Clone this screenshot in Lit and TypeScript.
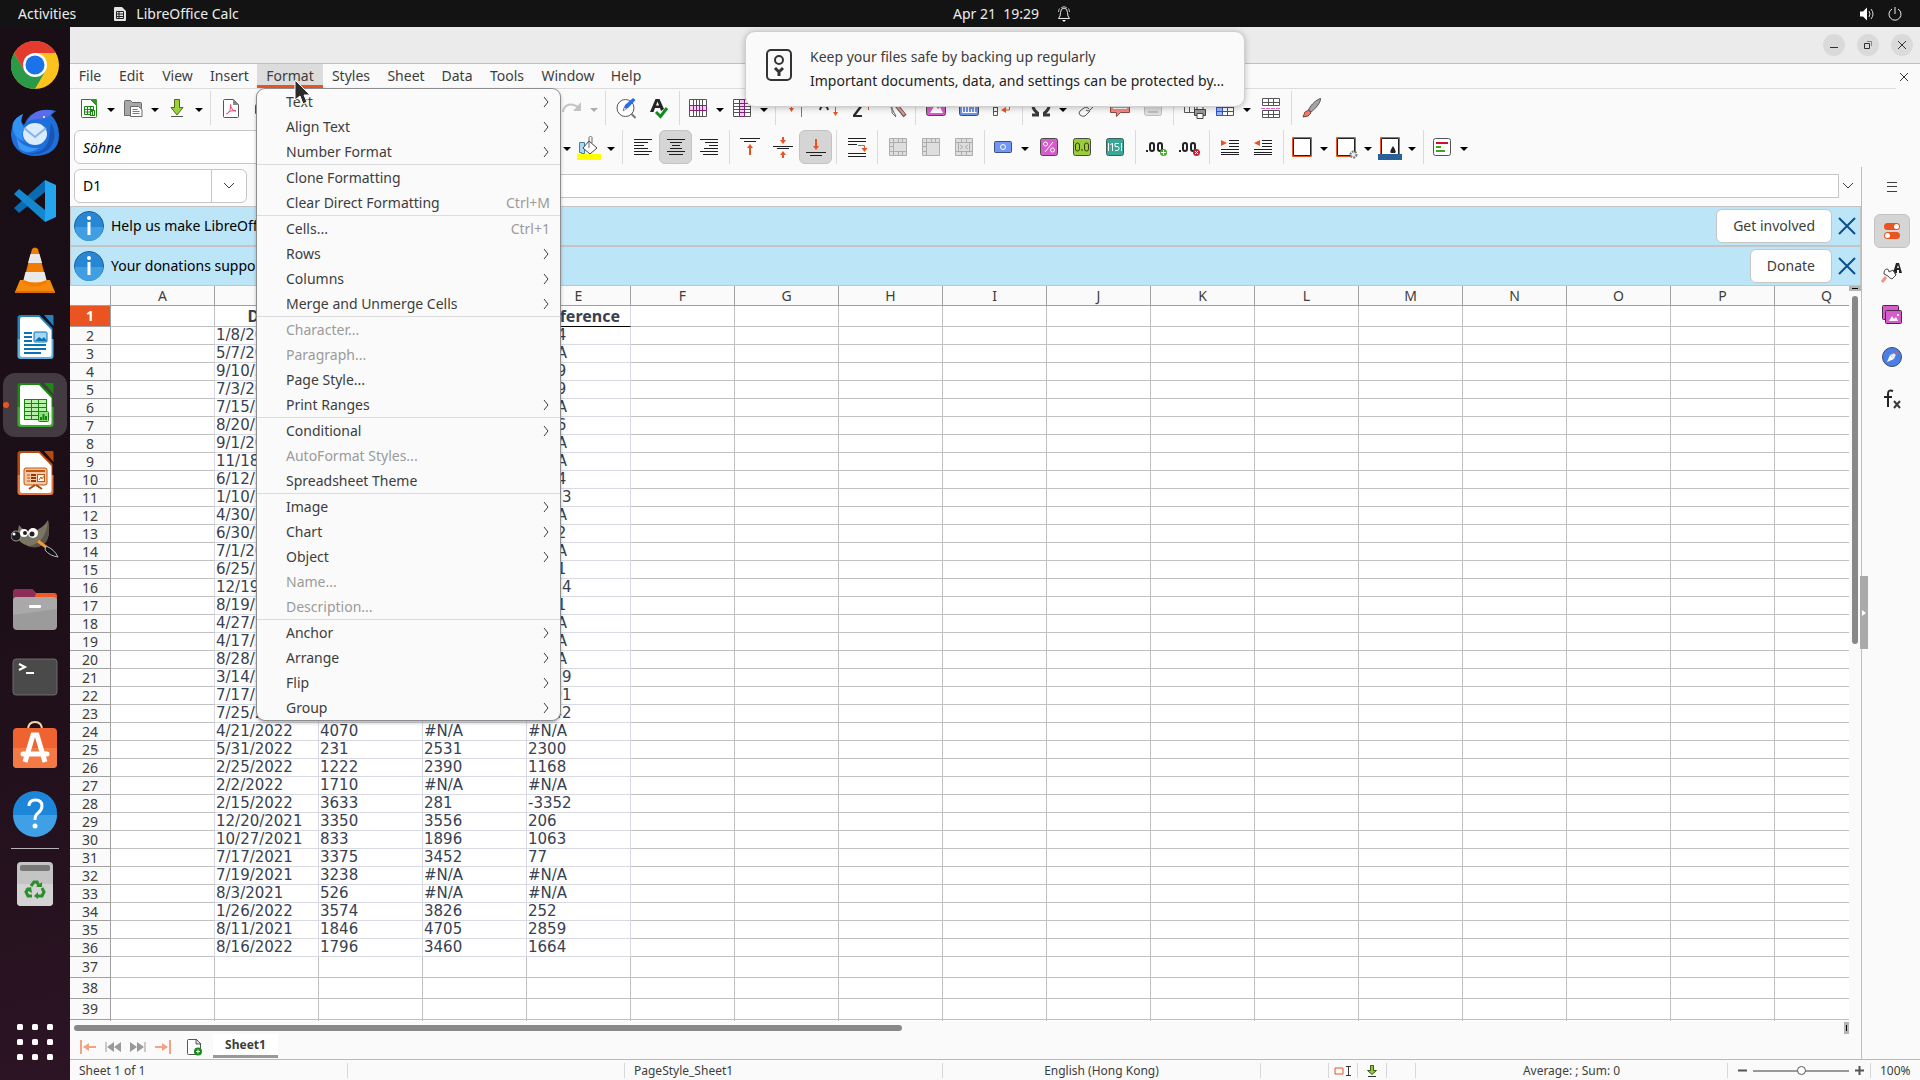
import { LitElement, html, svg, css, nothing, type TemplateResult } from "lit";
import { customElement, state } from "lit/decorators.js";
import { classMap } from "lit/directives/class-map.js";

type Art = ReturnType<typeof svg>;

const K = "#3d3d3d";
const O = "#e95420";
const line = (d: string, c = K, w = 1) => svg`<path d=${d} fill="none" stroke=${c} stroke-width=${w} />`;
const area = (d: string, c: string, s = "none", w = 1) => svg`<path d=${d} fill=${c} stroke=${s} stroke-width=${w} />`;

/* Toolbar glyphs, drawn on a 24 x 24 grid. */
const art: Record<string, Art> = {
  newSheet: svg`${area("M4.5 3.5h9l6 6v11q0 1-1 1h-13q-1 0-1-1z", "#fff", "#18880f", 1)}${area("M13 3h6q1 0 1 1v6z", "#2f9a24")}${line("M7.5 10.5h9v8h-9zM7 13.500h10M7 16h10M10.500 10v9M13.500 10v9", "#18880f", 1)}${area("M13 14h5v6h-5z", "#18880f")}${line("M14.500 16v3M16.500 15v4", "#fff", 1)}`,
  open: svg`${area("M3.5 19.500v-14q0-1 1-1h5l2 2h8q1 0 1 1v12z", "#a8a8a8", "#6b6b6b")}${area("M9.500 10.500h8l3.500 3v7h-11.500z", "#fff", "#6b6b6b")}${line("M11.500 13.500h5M11.500 15.500h7M11.500 17.500h7", "#6f6fd8")}`,
  save: svg`${area("M9.500 3.500h5v8h3.500l-6 7.500-6-7.500h3.500z", "#9bd13a", "#4e6b1c")}${line("M6 20.500h12", "#555")}`,
  pdf: svg`${area("M4.500 4.500q0-1 1-1h9l5 5v12q0 1-1 1h-13q-1 0-1-1z", "#fff", "#555")}${area("M14 3l6 6h-6z", "#8a8a8a")}${line("M7.500 18c3-1 4.500-5 4-9.500c.5 4 2 6 5.500 6.500c-4-.8-7 0-9.500 3", "#e8436a", 1)}`,
  print: svg`${area("M3.500 9.500q0-1 1-1h15q1 0 1 1v8h-17z", "#b0b0b0", "#555")}${area("M7 4h10v5H7zM7 14h10v7H7z", "#fff", "#555")}`,
  redo: svg`${line("M3 16c1-8 9-10 16-4", "#c4c4c4", 2)}${area("M21 6v9h-8z", "#c4c4c4")}`,
  find: svg`<circle cx="11.500" cy="12" r="8.500" fill="#fff" stroke="#555" stroke-width="1" />${line("M17.500 18l4 4", "#777", 2)}${area("M9 14l2-5 8-7 2.500 2-7.500 8z", "#2b6bea")}${area("M9 15l1.500-4 2 2z", "#fff", "#333", 0.5)}`,
  spell: svg`${area("M3 16L8.500 3h4L17 13l-3 2-1-3H8l-1.500 4zM9 9.500h3L10.500 5.500z", "#242424")}${line("M9 16l4.500 4.500L20 12", "#138a1e", 3)}`,
  row: svg`${area("M3.500 3.500h17v17h-17z", "#fff", "#555")}${line("M7.500 3v18M10.500 3v18M13.500 3v18M16.500 3v18", "#555")}${area("M3.500 9.500h17v5h-17z", "#f4d0f1", "#84207c")}${line("M7.500 9v6M10.500 9v6M13.500 9v6M16.500 9v6", "#84207c")}`,
  column: svg`${area("M3.500 3.500h17v17h-17z", "#fff", "#555")}${line("M3 7.500h18M3 10.500h18M3 13.500h18M3 16.500h18", "#555")}${area("M9.500 3.500v17h5v-17z", "#f4d0f1", "#84207c")}${line("M9 7.500h6M9 10.500h6M9 13.500h6M9 16.500h6", "#84207c")}`,
  sort: svg`${line("M7.500 4v11M17.500 9v12", O, 1)}${area("M5 12h5l-2.500 4zM15 10h5l-2.500-4z", O)}`,
  sortAsc: svg`${line("M3 14l1-3q3-2 6 0l1 3", "#2b2b2b", 2)}${line("M18.500 5v13", O)}${area("M16 16h5l-2.500 4z", O)}`,
  sortDesc: svg`${area("M3 9h9v2l-6 8h6v2H3v-2l6-8H3z", "#2b2b2b")}${line("M18.500 5v9", O)}${area("M16 8h5l-2.500-4z", O)}`,
  filter: svg`${line("M5 6l8 14M9 9v8l4 4", "#666")}${line("M10 5l12 15", "#555", 4)}${line("M10.500 6l11 13", "#f29487", 2)}`,
  image: svg`<rect x="2.500" y="3.500" width="19" height="16" rx="2" fill="#d65ccb" stroke="#4a4a4a" />${area("M6 17l5-8 3 4 2-2 3 6z", "#fff")}`,
  chart: svg`<rect x="2.500" y="3.500" width="19" height="16" rx="2" fill="#6f93f0" stroke="#4a4a4a" />${line("M5.500 6v10.500h14M8.500 16v-5M11.500 16v-8M14.500 16v-3M17.500 16v-7", "#fff")}`,
  pivot: svg`${line("M3.500 3.500h16v4h-16zM3.500 7.500h4v12h-4zM3.500 11.500h4M3.500 15.500h4", "#555")}${line("M19.500 9v5h-5", O)}${area("M11 14l5-3v6z", O)}`,
  omega: svg`${line("M3 19h5.500v-2C5 14.500 4 12 4 9.500 4 5.500 8 3 12 3s8 2.500 8 6.500c0 2.500-1 5-4.500 7.500v2H21", "#3a3a3a", 3)}`,
  link: svg`${line("M10 9l4-4q3-2 5 0t0 5l-4 4q-2 2-4 0M14 13l-1-1q-2-2-4 0l-4 3q-2 2 0 4t5 1l5-5", "#555", 1)}`,
  comment: svg`${area("M2.500 4.500h19v12h-9l-4 4v-4h-6z", "#f5897c", "#8d4b44")}${line("M5 8.500h14M5 12.500h14", "#fff")}`,
  headerFooter: svg`<rect x="3.500" y="3.500" width="17" height="16" rx="2" fill="#dedede" stroke="#bdbdbd" />${line("M7 7h10M7 16h10", "#bdbdbd", 2)}`,
  printArea: svg`${line("M2.500 4.500h15v12h-15zM2 10.500h16M7.500 4v12M12.500 4v12", "#555")}${line("M2 8.500h15", "#84207c", 2)}${area("M12.500 13.500h11v6h-11z", "#9a9a9a", "#444")}${area("M15 10.500h6v3h-6zM15 17.500h6v5h-6z", "#fff", "#444")}`,
  freeze: svg`${area("M3.500 3.500h17v16h-17z", "#fff", "#555")}${line("M9.500 8v12M14.500 8v12M3 11.500h18M3 15.500h18", "#555")}${area("M3.500 3.500h6v16h-6z", "#9fb7f8", "#2b57c8")}${line("M3 7.500h17M3 11.500h6M3 15.500h6", "#2b57c8")}`,
  split: svg`${area("M3.500 2.500h17v7h-17zM3.500 14.500h17v7h-17z", "#fff", "#555")}${line("M3 6.500h18M3 18.500h18M9.500 3v7M14.500 3v7M9.500 14v7M14.500 14v7", "#555")}<path d="M2 12.500h20" stroke="#e264d5" stroke-dasharray="4 1" />`,
  brush: svg`${area("M8.500 14C11 8 17 3.500 20.500 2.500C21 7 14 14 11 16z", "#a5a5a5", "#555")}${area("M3 21l2-5 4-2 2 3-3 3z", "#f27b68", "#7b4038")}`,
  fontColor: svg`${line("M6 14L12 3l6 11", K, 2)}`,
  fill: svg`${area("M2.500 7.500h5v11h-3v-1h-2z", "#a9dbf5", "#4c7f9c")}${area("M12 6l8 7-7 6-7-6z", "#fff", "#444")}${line("M12 13V2.500q1.500-3 3 0V8", "#666")}${area("M0 19h24v6H0z", "#ffff00")}`,
  alignL: svg`${line("M3 4.500h18M3 7.500h14M3 10.500h10M3 13.500h14M3 16.500h18M3 19.500h15", "#1f1f1f")}`,
  alignC: svg`${line("M3 4.500h18M6 7.500h12M8 10.500h8M6 13.500h12M3 16.500h18M5 19.500h14", "#1f1f1f")}`,
  alignR: svg`${line("M3 4.500h18M8 7.500h13M12 10.500h9M7 13.500h14M3 16.500h18M6 19.500h15", "#1f1f1f")}`,
  top: svg`${line("M2 3.500h20M6 6.500h12", "#1f1f1f")}${line("M12 11v9", O, 2)}${area("M9 13l3-4 3 4z", O)}`,
  middle: svg`${line("M2 11.500h20M6 13.500h12", "#1f1f1f")}${line("M12 2v5M12 17v6", O, 2)}${area("M9 5h6l-3 4zM9 20h6l-3-4z", O)}`,
  bottom: svg`${line("M2 17.500h20M6 20.500h12", "#1f1f1f")}${line("M12 4v9", O, 2)}${area("M9 11h6l-3 4z", O)}`,
  wrap: svg`${line("M3 3.500h18M3 6.500h18M3 9.500h9M3 18.500h18M3 21.500h18", "#1f1f1f")}${line("M13 10.500h6.500v3", O, 1)}${area("M16.500 13h6l-3 4z", O)}`,
  merge1: svg`${area("M3.500 3.500h17v17h-17z", "#dedede", "#adadad")}${line("M3 7.500h18M8 16.500h13M7.500 3v18M12.500 3v5M12.500 16v5M16.500 3v5M16.500 16v5M3 11.500h5M3 16.500h5", "#adadad")}`,
  merge2: svg`${area("M3.500 3.500h17v17h-17z", "#dedede", "#adadad")}${line("M3 7.500h18M3 16.500h5M7.500 3v18M12.500 3v5M16.500 3v5M3 11.500h5", "#adadad")}`,
  merge3: svg`${area("M3.500 3.500h17v17h-17z", "#dedede", "#adadad")}${line("M3 7.500h18M3 16.500h18M9.500 3v5M14.500 3v5M9.500 16v5M14.500 16v5M8 10l3 2-3 2M16 10l-3 2 3 2M6.500 7v10M17.500 7v10", "#adadad")}`,
  currency: svg`<rect x="3.500" y="6.500" width="17" height="11" rx="1" fill="#6f97f3" stroke="#3f4f77" /><circle cx="12" cy="12" r="2.500" fill="none" stroke="#fff" />`,
  percent: svg`<rect x="3.500" y="3.500" width="17" height="17" rx="2" fill="#d65ccb" stroke="#4a4a4a" />${line("M16 7l-8 10", "#fff")}<circle cx="8.500" cy="9" r="2" fill="none" stroke="#fff" /><circle cx="15.500" cy="15" r="2" fill="none" stroke="#fff" />`,
  number: svg`<rect x="3.500" y="3.500" width="17" height="17" rx="2" fill="#9ccc3c" stroke="#4a4a4a" /><rect x="5.500" y="8" width="4" height="8" rx="2" fill="none" stroke="#33420f" /><rect x="14.500" y="8" width="4" height="8" rx="2" fill="none" stroke="#33420f" />${line("M12 14v2", "#33420f")}`,
  date: svg`<rect x="3.500" y="3.500" width="17" height="17" rx="2" fill="#35a898" stroke="#3f5f5b" />${line("M5.500 8v8M18.500 8v8M7.500 10l2-2v8M16 8.500h-4v3h2q2 0 2 2t-2 2h-2", "#fff")}`,
  decAdd: svg`${area("M2 15h2v2H2z", "#242424")}<rect x="6" y="8" width="4" height="8" rx="2" fill="none" stroke="#242424" stroke-width="2" /><rect x="14" y="8" width="4" height="8" rx="2" fill="none" stroke="#242424" stroke-width="2" /><circle cx="19.500" cy="17.500" r="3.500" fill="#44a62b" />${line("M17 17.500h5M19.500 15v5", "#fff", 1)}`,
  decDel: svg`${area("M2 15h2v2H2z", "#242424")}<rect x="6" y="8" width="4" height="8" rx="2" fill="none" stroke="#242424" stroke-width="2" /><rect x="14" y="8" width="4" height="8" rx="2" fill="none" stroke="#242424" stroke-width="2" /><circle cx="19.500" cy="17.500" r="3.500" fill="#cc1f3a" />${line("M18 16l3 3M21 16l-3 3", "#fff", 1)}`,
  indent: svg`${line("M11 5.500h10M11 8.500h10M11 11.500h10M3 14.500h18M3 17.500h18M3 19.500h18", "#1f1f1f")}${area("M3 5l6 3-6 3z", O)}`,
  outdent: svg`${line("M11 5.500h10M11 8.500h10M11 11.500h10M3 14.500h18M3 17.500h18M3 19.500h18", "#1f1f1f")}${area("M9 5L3 8l6 3z", O)}`,
  borders: svg`${area("M2.500 2.500h19v19h-19z", "#fff", O)}${line("M3.500 3.500h17v17h-17z", "#222", 1)}`,
  borderStyle: svg`${area("M2.500 2.500h19v19h-19z", "#fff", O)}${line("M3.500 20.500v-17h17v17z", "#222", 1)}<circle cx="19.500" cy="19.500" r="3" fill="#eee" stroke="#777" stroke-width="2" stroke-dasharray="2 1" />`,
  borderColor: svg`${area("M2.500 2.500h19v19h-19z", "#fff", O)}${line("M3.500 20V3.500h17V20", "#222", 1)}${area("M15 11q4 6 2 7h-4q-2-1 2-7z", "#222")}${area("M0 19h24v6H0z", "#2a6099")}`,
  conditional: svg`<rect x="3.500" y="3.500" width="17" height="17" rx="2" fill="#fff" stroke="#555" />${line("M6 8h12", "#c9142e", 2)}${line("M6 12h5M6 16h9", "#3fa621", 2)}`,
  settings: svg`<rect x="4" y="4" width="16" height="7" rx="3.500" fill="${O}" /><rect x="4" y="13" width="16" height="7" rx="3.500" fill="${O}" /><circle cx="16.500" cy="7.500" r="2.500" fill="#fff" /><circle cx="7.500" cy="16.500" r="2.500" fill="#fff" />`,
  styles: svg`${area("M13 12l3-10h3l3 10h-3v-3h-2v3zM17 7h2l-1-3z", "#222")}${area("M4 13q0-5 3-5 2 0 2 3l4-2q2 3 3 5l-4 4q-3-1-4-3z", "#fff", "#444")}${line("M2 21l4-5", "#f29487", 3)}${line("M13 9l3 5", "#444")}`,
  gallery: svg`<rect x="2.500" y="2.500" width="16" height="14" rx="1" fill="#d65ccb" stroke="#4a2a46" /><rect x="5.500" y="7.500" width="16" height="13" rx="1" fill="#d65ccb" stroke="#4a2a46" />${area("M9 18l3-5 2 3 2-2 2 4z", "#fff")}${area("M17 11h2v2h-2z", "#fff")}`,
  navigator: svg`<circle cx="12" cy="12" r="9.500" fill="#4b7fe8" stroke="#3f4a63" />${area("M7 17l3-7 4 4z", "#fff")}${area("M10 10l7-3-3 7z", "#e9e9f6")}${area("M14 8l3-1-1 3z", "#e33")}`,
  functions: svg`${line("M13 4q-5-2-5 3v13M4 10h8", "#242424", 2)}${line("M14 14l6 7M20 14l-6 7", "#3a3a3a", 2)}`,
  burger: svg`${line("M7 5.500h10M7 9.500h10M7 14.500h10", "#3d3d3d")}`,
};

const glyph = (name: string) => html`<svg class="glyph" viewBox="0 0 24 24" aria-hidden="true">${art[name]}</svg>`;

const doc = (light: string, dark: string, inner: Art) => svg`
  <path d="M8.500 2h20l13 13v28q0 3-3 3h-27q-3 0-3-3V5q0-3 3-3z" fill=${light} />
  <path d="M6.500 26h36v17q0 3-3 3h-30q-3 0-3-3z" fill=${dark} />
  <path d="M6.500 26V5q0-3 3-3h3v24z" fill=${light} />
  <path d="M11 4h17l12.500 13v25q0 2-2 2H11q-2 0-2-2V6q0-2 2-2z" fill="#fff" />
  <path d="M33 2h8.500q1 0 1 1v10z" fill=${light} />
  ${inner}`;

const apps: { name: string; active?: boolean; art: Art }[] = [
  { name: "Google Chrome", art: svg`<circle cx="24" cy="24" r="24" fill="#fcc31e" />
      <path d="M3.200 12L13.600 30l10.400 5v13A24 24 0 0 1 3.200 12z" fill="#2b9a48" /><path d="M13.600 30L24 48l10.400-18z" fill="#2b9a48" />
      <path d="M3.200 12A24 24 0 0 1 44.800 12H24L13.600 30z" fill="#e33b2e" />
      <circle cx="24" cy="24" r="12" fill="#fff" /><circle cx="24" cy="24" r="9.500" fill="#1a73e8" />` },
  { name: "Thunderbird", art: svg`<path d="M2 14Q5 8 12 5q-4 8 1 11Q18 3 32 1q7-1 13 1l-5 4q8 8 8 20 0 20-24 21Q2 46 0 26q0-4 2-12z" fill="#1f6fd8" /><path d="M2 14Q5 8 12 5q-4 8 1 14-4 8 1 14Q0 28 2 14z" fill="#3292f5" /><path d="M16 13Q22 1 34 1l8 1q-4 8-14 8-8 0-12 3z" fill="#5a6cea" /><circle cx="33" cy="8" r="1" fill="#fff" />
      <path d="M40 14q8 14-2 26-10 8-24 4Q34 46 38 30z" fill="#1854b8" />
      <ellipse cx="24" cy="25" rx="12" ry="11" fill="#dcecff" /><path d="M13 19l11 9 11-9" fill="none" stroke="#86b3ea" stroke-width="2" /><path d="M5 27q6 13 23 12-12 8-20 0z" fill="#3c97f5" />` },
  { name: "Visual Studio Code", art: svg`<path d="M34 3v12L8 36l-5-5z" fill="#0a6bb3" /><path d="M34 45V33L8 12l-5 5z" fill="#1487cf" /><path d="M34 3l11 5v32l-11 5z" fill="#25a4ef" />` },
  { name: "VLC media player", art: svg`<path d="M9 35h30l5 12H4z" fill="#f58a0c" /><path d="M4 46h40v2H4z" fill="#d96d00" /><path d="M21 4q3-3 6 0l9 34q-12 7-24 0z" fill="#f07d00" /><path d="M19.500 9h9l2.500 9H17zM14.500 27h19l2 8q-11 5-23 0z" fill="#e9e9e9" />` },
  { name: "LibreOffice Writer", art: doc("#2283bd", "#5fb1e0", svg`<path d="M13 20h8M13 24h8M13 28h8M13 32h22M13 36h22M13 40h17" stroke="#0a73b5" stroke-width="2" /><rect x="23" y="19" width="13" height="10" rx="1" fill="#a6d8f5" stroke="#0a73b5" /><path d="M24 28l4-4 3 2 2-2 3 4z" fill="#0a73b5" />`) },
  { name: "LibreOffice Calc", active: true, art: doc("#1c8a12", "#3cad2c", svg`<rect x="13.500" y="18.500" width="22" height="20" fill="#b7f0a8" stroke="#18820f" /><path d="M13 22.500h22M13 26.500h22M13 30.500h22M13 34.500h22M20.500 18v20M27.500 18v20" stroke="#18820f" stroke-width="1" /><rect x="27.500" y="30.500" width="10" height="10" rx="1" fill="#8fe07c" stroke="#18820f" /><path d="M30 39v-3M32.500 39v-6M35 39v-4" stroke="#18820f" stroke-width="2" />`) },
  { name: "LibreOffice Impress", art: doc("#b94a0c", "#e5753a", svg`<rect x="13" y="19" width="23" height="17" rx="2" fill="#f6c6a5" stroke="#c2560f" /><path d="M15 22h19" stroke="#c2560f" stroke-width="2" /><path d="M16 26h3M16 29h3M16 32h3" stroke="#d98d5c" stroke-width="2" /><path d="M20 26h5M20 29h5M20 32h5" stroke="#8b3a08" stroke-width="2" /><rect x="26.500" y="25.500" width="7" height="7" fill="#fff" stroke="#c2560f" /><path d="M28 31l2-3 1 2 2-3" fill="none" stroke="#c2560f" /><path d="M24 36l-6 4M25 36l6 4" stroke="#a8480b" stroke-width="2" />`) },
  { name: "GIMP", art: svg`<path d="M8 8q6 8 14 6 10-2 15-11 3 14-2 22-8 8-18 4Q8 26 6 20z" fill="#7b7563" /><path d="M37 3q3 14-2 22-8 8-18 4 18-2 20-26z" fill="#5b5648" /><ellipse cx="5" cy="19" rx="5" ry="5" fill="#1c1c1c" stroke="#999" /><circle cx="3" cy="17" r="1.500" fill="#fff" /><circle cx="13" cy="16" r="4" fill="#fff" /><circle cx="22" cy="16" r="5" fill="#fff" /><circle cx="14" cy="16" r="2" fill="#222" /><circle cx="21" cy="17" r="2.500" fill="#222" /><path d="M27 24l8 6" stroke="#ef9a33" stroke-width="3" /><path d="M35 29q8 3 12 11-8-1-13-7z" fill="#111" stroke="#bbb" stroke-width="1" />` },
  { name: "Files", art: svg`<path d="M2 8q0-4 4-4h15l4 4h18q3 0 3 3v8H2z" fill="#ee5a26" /><path d="M2 8q0-4 4-4h15l4 4-3 10H2z" fill="#8f2b57" /><rect x="2" y="12" width="44" height="33" rx="4" fill="#9b9b9b" /><path d="M2 30V16q0-4 4-4h36q4 0 4 4v8z" fill="#a9a9a9" /><rect x="18" y="20" width="12" height="3" rx="1" fill="#fff" />` },
  { name: "Terminal", art: svg`<rect x="2" y="6" width="44" height="36" rx="3" fill="#4a4a4a" stroke="#6a6a6a" /><path d="M8 11l6 3-6 3" fill="none" stroke="#fff" stroke-width="2" /><path d="M15 20h8" stroke="#fff" stroke-width="2" />` },
  { name: "Ubuntu Software", art: svg`<path d="M17 9q0-8 7-8t7 8" fill="none" stroke="#f5d7a8" stroke-width="2" /><rect x="2" y="7" width="44" height="40" rx="4" fill="#ef6331" /><path d="M2 27h44v16q0 4-4 4H6q-4 0-4-4z" fill="#f47a45" /><path d="M14 41l8-27h4l8 27" fill="none" stroke="#fff" stroke-width="5" /><path d="M12 33h24" stroke="#fff" stroke-width="5" stroke-linecap="round" />` },
  { name: "Help", art: svg`<circle cx="24" cy="24" r="22" fill="#1e86d8" /><path d="M2 26a22 22 0 0 0 44 0z" fill="#3fa0e6" /><path d="M18 17q0-6 6.500-6t6.500 6q0 4-4 7-3 2-3 7" fill="none" stroke="#fff" stroke-width="3" /><circle cx="24" cy="37" r="2.500" fill="#fff" />` },
];

const trash = svg`<rect x="6" y="2" width="36" height="44" rx="4" fill="#c4c4c4" /><path d="M6 24h36v18q0 4-4 4H10q-4 0-4-4z" fill="#d3d3d3" /><rect x="9" y="5" width="30" height="6" rx="2" fill="#777" />
  <path d="M20 26l3-4h3l2 4M31 28l2 4-2 4h-4M21 36h-4l-2-4 3-4" fill="none" stroke="#2a8f2a" stroke-width="3" /><path d="M25 27h6v-5zM27 32v7l-4-3zM14 29l6-2 1 6z" fill="#2a8f2a" />`;

type MenuEntry = { label: string; sub?: boolean; off?: boolean; keys?: string } | null;
const s = (label: string): MenuEntry => ({ label, sub: true });
const n = (label: string, keys?: string): MenuEntry => ({ label, keys });
const d = (label: string): MenuEntry => ({ label, off: true });

const formatMenu: MenuEntry[] = [
  s("Text"), s("Align Text"), s("Number Format"), null,
  n("Clone Formatting"), n("Clear Direct Formatting", "Ctrl+M"), null,
  n("Cells...", "Ctrl+1"), s("Rows"), s("Columns"), s("Merge and Unmerge Cells"), null,
  d("Character..."), d("Paragraph..."), n("Page Style..."), s("Print Ranges"), null,
  s("Conditional"), d("AutoFormat Styles..."), n("Spreadsheet Theme"), null,
  s("Image"), s("Chart"), s("Object"), d("Name..."), d("Description..."), null,
  s("Anchor"), s("Arrange"), s("Flip"), s("Group"),
];
const menus = ["File", "Edit", "View", "Insert", "Format", "Styles", "Sheet", "Data", "Tools", "Window", "Help"];

/* "|" is a divider, a trailing "+" adds a drop-down arrow, "*" marks a pressed button. */
const standardBar = ["newSheet+", "open+", "save+", "|", "pdf", "print", "gap", "redo+", "|", "find", "spell", "|", "row+", "column+", "|", "sort", "sortAsc", "sortDesc", "filter", "|", "image", "chart", "pivot", "|", "omega+", "link", "comment", "headerFooter", "|", "printArea", "freeze+", "split", "|", "brush"];
const formatBar = ["fontColor+", "fill+", "|", "alignL", "alignC*", "alignR", "|", "top", "middle", "bottom*", "|", "wrap", "|", "merge1", "merge2", "merge3", "|", "currency+", "percent", "number", "date", "|", "decAdd", "decDel", "|", "indent", "outdent", "|", "borders+", "borderStyle+", "borderColor+", "|", "conditional+"];

const columns = "ABCDEFGHIJKLMNOPQ".split("");
const cells: string[][] = [
  ["Date", "", "", "Difference"],
  ["1/8/2022", "", "", "1004"], ["5/7/2022", "", "", "#N/A"], ["9/10/2021", "", "", "1029"], ["7/3/2022", "", "", "1109"],
  ["7/15/2022", "", "", "#N/A"], ["8/20/2022", "", "", "1136"], ["9/1/2021", "", "", "#N/A"], ["11/18/2021", "", "", "#N/A"],
  ["6/12/2022", "", "", "1224"], ["1/10/2022", "", "", "-1123"], ["4/30/2022", "", "", "#N/A"], ["6/30/2022", "", "", "1412"],
  ["7/1/2022", "", "", "#N/A"], ["6/25/2022", "", "", "1201"], ["12/19/2021", "", "", "-1154"], ["8/19/2022", "", "", "1121"],
  ["4/27/2022", "", "", "#N/A"], ["4/17/2022", "", "", "#N/A"], ["8/28/2022", "", "", "#N/A"], ["3/14/2022", "", "", "-1129"],
  ["7/17/2022", "", "", "-1191"], ["7/25/2022", "", "", "-1142"],
  ["4/21/2022", "4070", "#N/A", "#N/A"], ["5/31/2022", "231", "2531", "2300"], ["2/25/2022", "1222", "2390", "1168"],
  ["2/2/2022", "1710", "#N/A", "#N/A"], ["2/15/2022", "3633", "281", "-3352"], ["12/20/2021", "3350", "3556", "206"],
  ["10/27/2021", "833", "1896", "1063"], ["7/17/2021", "3375", "3452", "77"], ["7/19/2021", "3238", "#N/A", "#N/A"],
  ["8/3/2021", "526", "#N/A", "#N/A"], ["1/26/2022", "3574", "3826", "252"], ["8/11/2021", "1846", "4705", "2859"],
  ["8/16/2022", "1796", "3460", "1664"], [], [], [],
];

const base = css`
  * { box-sizing: border-box; }
  button, input { font: inherit; color: inherit; margin: 0; padding: 0; border: 0; background: none; }
  svg { display: block; flex: none; }
  .glyph { width: 24px; height: 24px; overflow: visible; }
`;

@customElement("app-dock")
class AppDock extends LitElement {
  static styles = [base, css`
    :host { display: flex; flex-direction: column; align-items: center; gap: 4px; width: 70px; flex: none; padding: 6px 0; background: linear-gradient(165deg, #190e15 0%, #1d0f18 55%, #2c1424 100%); }
    .app { position: relative; display: flex; width: 64px; height: 64px; align-items: center; justify-content: center; border-radius: 12px; }
    .app svg { width: 48px; height: 48px; }
    .active { background: #433b41; }
    .active::before { content: ""; position: absolute; left: 0; top: 29px; width: 6px; height: 6px; border-radius: 3px; background: #e95420; }
    .rule { width: 48px; height: 1px; margin: -1px 0; background: #b9b4b7; flex: none; }
    .grid { margin-top: auto; }
  `];
  render() {
    return html`
      ${apps.map((a) => html`<button class=${classMap({ app: true, active: !!a.active })} aria-label=${a.name}><svg viewBox="0 0 48 48">${a.art}</svg></button>`)}
      <div class="rule"></div>
      <button class="app" aria-label="Trash"><svg viewBox="0 0 48 48">${trash}</svg></button>
      <button class="app grid" aria-label="Show Applications"><svg viewBox="0 0 48 48">${[9, 24, 39].map((y) => [9, 24, 39].map((x) => svg`<rect x=${x - 3} y=${y - 3} width="6" height="6" rx="1.500" fill="#fff" />`))}</svg></button>`;
  }
}

@customElement("calc-grid")
class CalcGrid extends LitElement {
  static styles = [base, css`
    :host { display: block; flex: 1; min-width: 0; min-height: 0; overflow: hidden; background: #fff; }
    table { width: 1809px; table-layout: fixed; border-collapse: separate; border-spacing: 0; }
    .index { width: 41px; }
    .col { width: 104px; }
    th { padding: 0; background: #fafafa; color: #3d3d3d; font-weight: 400; font-size: 14px; line-height: 16px; border-right: 1px solid #a0a0a0; border-bottom: 1px solid #a0a0a0; overflow: hidden; }
    thead th { height: 20px; }
    td { height: 18px; padding: 1px 0 0 1px; border-right: 1px solid #c0c0c0; border-bottom: 1px solid #c0c0c0; font-family: "DejaVu Sans", sans-serif; font-size: 15px; line-height: 15px; color: #374151; white-space: nowrap; vertical-align: top; }
    .data td.pasted { border-color: #d9d9e3; }
    .data td.before { border-right-color: #d9d9e3; }
    .tall td { height: 21px; }
    .head td.title { font-family: "Noto Sans", sans-serif; font-size: 16px; line-height: 20px; font-weight: 700; padding: 0; text-align: center; border-right-color: #d9d9e3; }
    .head td.ruled { border-bottom-color: #000; }
    .head th { background: #e95420; color: #fff; font-weight: 700; }
  `];
  render() {
    return html`<table>
      <colgroup><col class="index" />${columns.map(() => html`<col class="col" />`)}</colgroup>
      <thead><tr><th></th>${columns.map((c) => html`<th scope="col">${c}</th>`)}</tr></thead>
      <tbody>
        ${cells.map((row, r) => html`<tr class=${classMap({ head: r === 0, tall: r === 0 || r > 35, data: r > 0 && r < 36 })}>
          <th scope="row">${r + 1}</th>
          ${columns.map((_, c) => {
            const inside = c > 0 && c < 5;
            return html`<td class=${classMap({ pasted: inside && r > 0 && r < 36, before: c === 0, title: inside && r === 0, ruled: c === 4 && r === 0 })}>${inside && row[c - 1] ? row[c - 1] : nothing}</td>`;
          })}
        </tr>`)}
        <tr class="tall"><th></th>${columns.map(() => html`<td></td>`)}</tr>
      </tbody>
    </table>`;
  }
}

@customElement("app-root")
class AppRoot extends LitElement {
  @state() private open = "Format";

  static styles = [base, css`
    :host { display: flex; flex-direction: column; height: 100vh; overflow: hidden; position: relative; font-family: "Noto Sans", "Open Sans", sans-serif; font-size: 14px; line-height: 20px; color: #3d3d3d; background: #fafafa; }
    .topbar { display: flex; align-items: center; height: 27px; flex: none; background: #131313; color: #ececec; }
    .top-left { flex: 1; display: flex; align-items: center; gap: 38px; padding-left: 18px; }
    .app-name { display: flex; align-items: center; gap: 10px; }
    .clock { display: flex; align-items: center; gap: 18px; padding-left: 103px; line-height: 18px; white-space: pre; }
    .top-right { flex: 1; display: flex; justify-content: flex-end; gap: 12px; padding-right: 17px; }
    .desk { flex: 1; min-height: 0; display: flex; }
    .window { flex: 1; min-width: 0; display: flex; flex-direction: column; position: relative; }
    .titlebar { display: flex; align-items: center; justify-content: flex-end; gap: 12px; height: 37px; flex: none; padding-right: 7px; background: #ebebeb; border-bottom: 1px solid #bfbfbf; }
    .round { width: 22px; height: 22px; border-radius: 11px; background: #dadada; display: grid; place-items: center; }
    .menubar { display: flex; align-items: stretch; height: 25px; flex: none; }
    .menus { flex: 1; display: grid; grid-template-columns: 40px 43px 49px 55px 66px 56px 54px 48px 52px 70px 46px; border-bottom: 1px solid #dcdcdc; }
    .doc-close { width: 24px; display: grid; place-items: center; padding-right: 8px; }
    .menu { position: relative; display: flex; }
    .menu > button { width: 100%; text-align: center; line-height: 24px; }
    .menu.open > button { background: #dcdcdc; box-shadow: inset 0 -3px #e95420; }
    .popup { position: absolute; z-index: 5; left: 0; top: 25px; width: 303px; background: #fafafa; border-radius: 8px; box-shadow: 0 0 0 1px #8d8d8d, 0 2px 4px rgba(0, 0, 0, 0.4); }
    .entry { display: flex; align-items: center; justify-content: space-between; width: 100%; height: 25px; padding: 0 10px 0 29px; text-align: left; line-height: 25px; }
    .entry .keys, .entry:disabled { color: #9b9b9b; }
    .entry svg { width: 8px; height: 12px; }
    .line { height: 1px; background: #dcdcdc; }
    .toolbar { display: flex; align-items: center; height: 39px; flex: none; padding: 0 0 1px 4px; }
    .tool { width: 33px; height: 34px; display: grid; place-items: center; border-radius: 6px; flex: none; }
    .tool.pressed { background: #d5d5d5; border: 1px solid #c3c3c3; }
    .tool.wide { width: 29px; }
    .arrow { width: 15px; height: 34px; display: grid; place-items: center; padding-top: 4px; flex: none; }
    .dim { opacity: 0.3; }
    .divider { width: 8px; height: 34px; flex: none; background: linear-gradient(#dadada, #dadada) center / 1px 100% no-repeat; }
    .gap { width: 277px; flex: none; }
    .field { height: 34px; border: 1px solid #c6c6c6; border-radius: 6px; background: #fff; color: #000; padding: 0 8px; }
    .font-name { width: 380px; margin-right: 76px; font-style: italic; flex: none; }
    .body { flex: 1; min-height: 0; display: flex; }
    .main { flex: 1; min-width: 0; display: flex; flex-direction: column; }
    .formula-row { display: flex; align-items: center; height: 39px; flex: none; padding: 0 0 1px 4px; }
    .name-box { display: flex; width: 173px; padding: 0; margin-right: 310px; }
    .name-box input { flex: 1; min-width: 0; padding: 0 8px; }
    .name-box button { width: 35px; border-left: 1px solid #c6c6c6; display: grid; place-items: center; }
    .formula { flex: 1; min-width: 0; height: 24px; border: 1px solid #c6c6c6; background: #fff; padding: 0 6px; }
    .expand { width: 22px; height: 24px; display: grid; place-items: center; padding-right: 4px; }
    .info { display: flex; align-items: center; height: 40px; flex: none; padding: 0 4px 0 3px; border: 1px solid #c4c4c4; background: #bce5f7; color: #000; }
    .info p { flex: 1; margin: 0 0 0 7px; }
    .info .action { height: 34px; padding: 0 16px; margin-right: 6px; border: 1px solid #c6c6c6; border-radius: 6px; background: #fff; color: #3d3d3d; }
    .sheet { flex: 1; min-height: 0; display: flex; }
    .vscroll { width: 12px; flex: none; display: flex; flex-direction: column; align-items: center; gap: 5px; }
    .vsplit { width: 12px; height: 5px; background: #b5b5b5; display: grid; place-items: center; }
    .vsplit::before { content: ""; width: 6px; height: 1px; background: #000; }
    .vthumb { width: 6px; height: calc(48% - 5px); border-radius: 3px; background: #888; }
    .hscroll { height: 13px; flex: none; display: flex; align-items: center; justify-content: space-between; padding: 0 12px 0 4px; }
    .hthumb { width: calc(47% - 6px); height: 6px; border-radius: 3px; background: #888; }
    .hsplit { width: 5px; height: 12px; background: #b5b5b5; display: grid; place-items: center; }
    .hsplit::before { content: ""; width: 1px; height: 6px; background: #000; }
    .tabs { display: flex; height: 25px; flex: none; padding-left: 5px; }
    .nav { width: 25px; display: grid; place-items: center; }
    .add { width: 38px; display: grid; place-items: center; }
    .tab { width: 65px; background: #fff; border-bottom: 3px solid #999; font-weight: 700; font-size: 12px; line-height: 20px; margin: 0 0 1px 0; }
    .side { width: 59px; flex: none; border-left: 1px solid #bdbdbd; display: flex; flex-direction: column; align-items: center; gap: 8px; padding: 5px 0 0 2px; position: relative; }
    .side button { width: 36px; height: 34px; border-radius: 6px; display: grid; place-items: center; }
    .side .pressed { background: #d5d5d5; border: 1px solid #c3c3c3; }
    .handle { position: absolute; left: -2px; top: 409px; width: 8px; height: 73px; background: #aaa; display: grid; place-items: center; }
    .status { display: grid; grid-template-columns: 278fr 277fr 318fr 318fr 68fr 29px 29px 29px 312fr 143px 49px; height: 21px; flex: none; border-top: 1px solid #b8b8b8; padding: 3px 0; font-size: 12px; line-height: 15px; }
    .status > * { display: flex; align-items: center; white-space: nowrap; border-right: 1px solid #d8d8d8; }
    .status > :last-child { border-right: 0; }
    .status .mid { justify-content: center; }
    .pad { padding-left: 9px; }
    .zoom { gap: 6px; padding: 0 6px 0 10px; }
    .zoom input { flex: 1; min-width: 0; height: 12px; appearance: none; background: linear-gradient(#999, #999) center / 100% 2px no-repeat; }
    .zoom input::-webkit-slider-thumb { appearance: none; width: 9px; height: 9px; border-radius: 5px; border: 1px solid #555; background: #fff; }
    .notice-layer { position: absolute; z-index: 6; inset: 4px 0 auto 0; display: flex; justify-content: center; pointer-events: none; }
    .notice { width: 500px; height: 76px; display: flex; gap: 18px; padding: 13px 0 0 20px; border: 1px solid #cfcfcf; border-radius: 10px; background: #fafafa; box-shadow: 0 1px 6px rgba(0, 0, 0, 0.25); white-space: nowrap; }
    .notice svg { margin-top: 4px; }
    .notice p { margin: 0; line-height: 24px; }
    .notice .strong { color: #222; }
    .cursor { position: absolute; z-index: 7; left: 294px; top: 79px; }
  `];

  private tool(id: string): TemplateResult {
    if (id === "|") return html`<span class="divider"></span>`;
    if (id === "gap") return html`<span class="gap"></span>`;
    const drop = id.endsWith("+");
    const pressed = id.endsWith("*");
    const name = drop || pressed ? id.slice(0, -1) : id;
    return html`<button class=${classMap({ tool: true, wide: drop, pressed })} aria-label=${name}>${glyph(name)}</button>${drop
      ? html`<button class=${classMap({ arrow: true, dim: name === "redo" })} aria-label="${name} options"><svg width="8" height="4" viewBox="0 0 8 4"><path d="M0 0h8L4 4z" fill="#000" /></svg></button>`
      : nothing}`;
  }

  private popup() {
    return html`<div class="popup" role="menu">
      ${formatMenu.map((e) => e === null
        ? html`<div class="line"></div>`
        : html`<button class="entry" role="menuitem" ?disabled=${!!e.off}><span>${e.label}</span>${e.keys ? html`<span class="keys">${e.keys}</span>` : nothing}${e.sub ? html`<svg viewBox="0 0 8 12"><path d="M2 1l4 5-4 5" fill="none" stroke="#3d3d3d" stroke-width="1" /></svg>` : nothing}</button>`)}
    </div>`;
  }

  private infobar(text: string, action: string) {
    return html`<div class="info">
      <svg width="30" height="30" viewBox="0 0 30 30"><circle cx="15" cy="15" r="14.500" fill="#2787d5" stroke="#1c5f96" /><path d="M1 16a14 14 0 0 0 28 0z" fill="#3f9fe2" /><circle cx="15" cy="7" r="2" fill="#fff" /><path d="M13.500 11h3v13h-3z" fill="#fff" /></svg>
      <p>${text}</p><button class="action">${action}</button>
      <button aria-label="Close"><svg width="18" height="18" viewBox="0 0 18 18"><path d="M1 1l16 16M17 1L1 17" stroke="#0b4f8f" stroke-width="2" /></svg></button>
    </div>`;
  }

  private chevron() {
    return html`<svg width="12" height="8" viewBox="0 0 12 8"><path d="M1 1l5 5 5-5" fill="none" stroke="#3d3d3d" /></svg>`;
  }

  render() {
    return html`
      <header class="topbar">
        <div class="top-left"><span>Activities</span>
          <span class="app-name"><svg width="12" height="14" viewBox="0 0 12 14"><path d="M0 1q0-1 1-1h7l4 4v9q0 1-1 1H1q-1 0-1-1z" fill="#e4e4e4" /><path d="M2.500 4.500h7v7h-7zM2 7h8M2 9.500h8M5 4v8" fill="none" stroke="#222" /></svg>LibreOffice Calc</span></div>
        <div class="clock"><span>Apr 21  19:29</span><svg width="14" height="16" viewBox="0 0 14 16"><path d="M1.500 12.500q2-2 2-6 0-4 3.500-4.500 3.500.5 3.500 4.500 0 4 2 6z" fill="none" stroke="#ececec" /><path d="M5 14h4l-2 2z" fill="#fff" /><path d="M4 2q3-3 6 0M1.500 6q0-2 1-3.500M12.500 6q0-2-1-3.500" stroke="#bbb" fill="none" /></svg></div>
        <div class="top-right">
          <svg width="16" height="16" viewBox="0 0 16 16"><path d="M1 5.500h3l4-4v13l-4-4H1z" fill="#fff" /><path d="M10 5q2 3 0 6M12 3q4 5 0 10" fill="none" stroke="#ddd" /></svg>
          <svg width="16" height="16" viewBox="0 0 16 16"><path d="M5 3a6 6 0 1 0 6 0M8 1v7" fill="none" stroke="#ececec" stroke-width="1" /></svg></div>
      </header>
      <div class="desk">
        <app-dock></app-dock>
        <div class="window">
          <div class="titlebar">
            <button class="round" aria-label="Minimize"><svg width="10" height="10" viewBox="0 0 10 10"><path d="M1 7.500h8" stroke="#333" /></svg></button>
            <button class="round" aria-label="Restore"><svg width="10" height="10" viewBox="0 0 10 10"><path d="M1.500 3.500h5v5h-5z" fill="none" stroke="#333" /><path d="M4 1.500h4.500V6" fill="none" stroke="#888" /></svg></button>
            <button class="round" aria-label="Close"><svg width="10" height="10" viewBox="0 0 10 10"><path d="M1 1l8 8M9 1L1 9" stroke="#333" /></svg></button>
          </div>
          <div class="menubar">
            <nav class="menus">
              ${menus.map((m) => html`<div class=${classMap({ menu: true, open: m === this.open })}><button @click=${() => (this.open = this.open === m ? "" : m)}>${m}</button>${m === "Format" && this.open === m ? this.popup() : nothing}</div>`)}
            </nav>
            <button class="doc-close" aria-label="Close document"><svg width="10" height="10" viewBox="0 0 10 10"><path d="M1 1l8 8M9 1L1 9" stroke="#333" /></svg></button>
          </div>
          <div class="toolbar">${standardBar.map((t) => this.tool(t))}</div>
          <div class="toolbar"><input class="field font-name" aria-label="Font name" value="Söhne" />${formatBar.map((t) => this.tool(t))}</div>
          <div class="body">
            <div class="main">
              <div class="formula-row">
                <div class="field name-box"><input aria-label="Name box" value="D1" /><button aria-label="Named ranges">${this.chevron()}</button></div>
                <input class="formula" aria-label="Formula" /><button class="expand" aria-label="Expand formula bar">${this.chevron()}</button>
              </div>
              ${this.infobar("Help us make LibreOffice even better!", "Get involved")}
              ${this.infobar("Your donations support our worldwide community.", "Donate")}
              <div class="sheet"><calc-grid></calc-grid><div class="vscroll"><span class="vsplit"></span><span class="vthumb"></span></div></div>
              <div class="hscroll"><span class="hthumb"></span><span class="hsplit"></span></div>
              <div class="tabs">
                <button class="nav" aria-label="First sheet"><svg width="16" height="14" viewBox="0 0 16 14"><path d="M1 0v14M4 7h12" stroke="#f5a183" stroke-width="2" /><path d="M3 7l6-4v8z" fill="#f5a183" /></svg></button>
                <button class="nav" aria-label="Previous sheet"><svg width="16" height="10" viewBox="0 0 16 10"><path d="M1 0v10" stroke="#999" /><path d="M9 0v10L2 5zM16 0v10L9 5z" fill="#999" /></svg></button>
                <button class="nav" aria-label="Next sheet"><svg width="16" height="10" viewBox="0 0 16 10"><path d="M15 0v10" stroke="#999" /><path d="M0 0v10l7-5zM7 0v10l7-5z" fill="#999" /></svg></button>
                <button class="nav" aria-label="Last sheet"><svg width="16" height="14" viewBox="0 0 16 14"><path d="M15 0v14M0 7h12" stroke="#f5a183" stroke-width="2" /><path d="M13 7L7 3v8z" fill="#f5a183" /></svg></button>
                <button class="add" aria-label="Add sheet"><svg width="16" height="18" viewBox="0 0 16 18"><path d="M10 1.500H2.500q-1 0-1 1v13q0 1 1 1h11q1 0 1-1V6z" fill="#fff" stroke="#555" /><path d="M10 1v5h5z" fill="#ddd" stroke="#555" /><circle cx="12" cy="13.500" r="4" fill="#1a8a1a" /><path d="M10 13.500h4M12 11.500v4" stroke="#fff" /></svg></button>
                <button class="tab">Sheet1</button>
              </div>
            </div>
            <aside class="side">
              <button aria-label="Sidebar settings">${glyph("burger")}</button>
              <button class="pressed" aria-label="Properties">${glyph("settings")}</button>
              <button aria-label="Styles">${glyph("styles")}</button>
              <button aria-label="Gallery">${glyph("gallery")}</button>
              <button aria-label="Navigator">${glyph("navigator")}</button>
              <button aria-label="Functions">${glyph("functions")}</button>
              <span class="handle"><svg width="4" height="6" viewBox="0 0 4 6"><path d="M0 0l4 3-4 3z" fill="#fff" /></svg></span>
            </aside>
          </div>
          <footer class="status">
            <span class="pad">Sheet 1 of 1</span><span></span><span class="pad">PageStyle_Sheet1</span><span class="mid">English (Hong Kong)</span><span></span>
            <span class="mid"><svg width="18" height="12" viewBox="0 0 18 12"><path d="M1 3h8v6H1z" fill="none" stroke="#e95420" /><path d="M12 1.500h5M12 10.500h5M14.500 1v10" stroke="#333" /></svg></span>
            <span class="mid"><svg width="10" height="12" viewBox="0 0 10 12"><path d="M3.500.5h3v5h3L5 9.500.500 5.500h3z" fill="#8fc63a" stroke="#3c5a14" /><path d="M1 11.500h8" stroke="#333" /></svg></span>
            <span></span><span class="mid">Average: ; Sum: 0</span>
            <span class="zoom"><svg width="9" height="9" viewBox="0 0 9 9"><path d="M0 4.500h9" stroke="#555" stroke-width="2" /></svg><input type="range" min="0" max="100" value="50" aria-label="Zoom" /><svg width="9" height="9" viewBox="0 0 9 9"><path d="M0 4.500h9M4.500 0v9" stroke="#555" stroke-width="2" /></svg></span>
            <span class="pad">100%</span>
          </footer>
          <div class="notice-layer"><div class="notice">
            <svg width="26" height="32" viewBox="0 0 26 32"><rect x="1" y="1" width="24" height="30" rx="4" fill="none" stroke="#333" stroke-width="2" /><circle cx="13" cy="11" r="4" fill="none" stroke="#333" stroke-width="2" /><path d="M9 19l4 4 4-4M13 22v5" fill="none" stroke="#333" stroke-width="3" /></svg>
            <div><p>Keep your files safe by backing up regularly</p><p class="strong">Important documents, data, and settings can be protected by…</p></div>
          </div></div>
        </div>
      </div>
      <svg class="cursor" width="17" height="26" viewBox="0 0 17 26"><path d="M1 1v20l5-4 3 8 4-2-3-7h6z" fill="#2b2b2b" stroke="#fff" stroke-width="1" /></svg>`;
  }
}
